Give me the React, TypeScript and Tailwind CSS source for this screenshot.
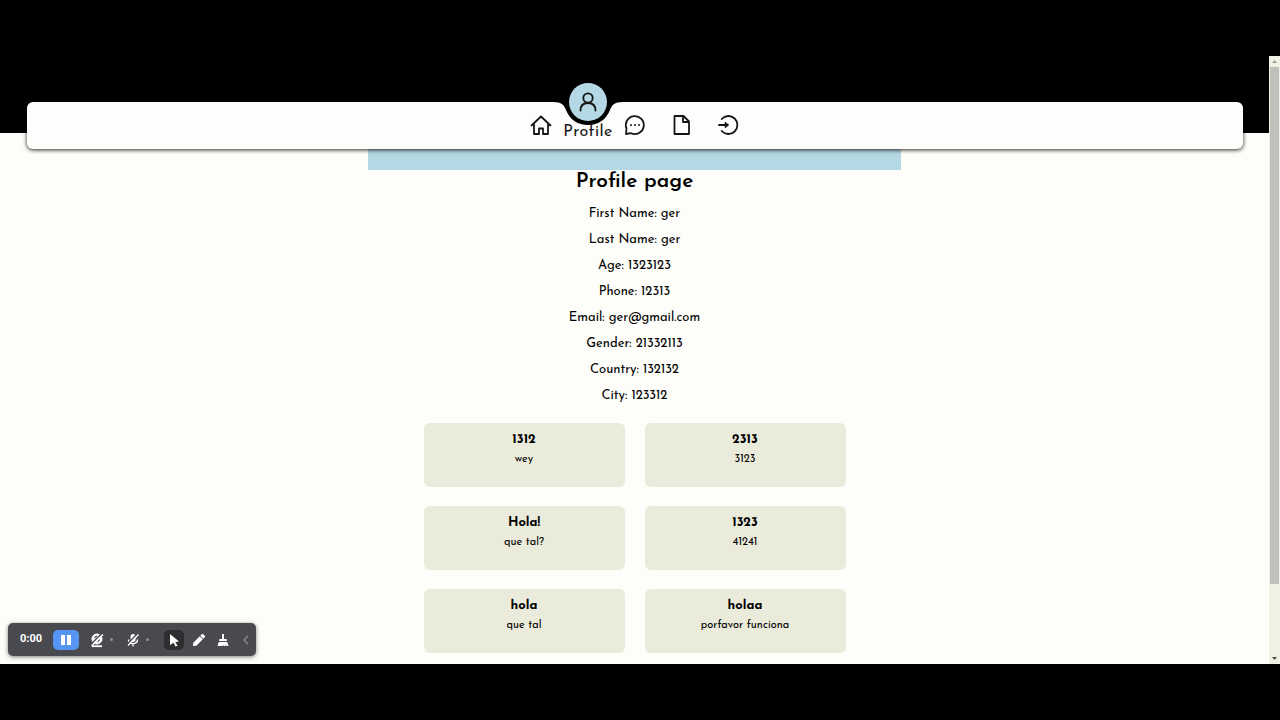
import type { ReactNode } from 'react';
import { FaPen } from 'react-icons/fa';

const details = [
  ['First Name', 'ger'],
  ['Last Name', 'ger'],
  ['Age', '1323123'],
  ['Phone', '12313'],
  ['Email', 'ger@gmail.com'],
  ['Gender', '21332113'],
  ['Country', '132132'],
  ['City', '123312'],
];

const posts = [
  { title: '1312', body: 'wey' },
  { title: '2313', body: '3123' },
  { title: 'Hola!', body: 'que tal?' },
  { title: '1323', body: '41241' },
  { title: 'hola', body: 'que tal' },
  { title: 'holaa', body: 'porfavor funciona' },
];

function Line({ children }: { children: ReactNode }) {
  return (
    <svg viewBox="0 0 24 24" fill="none" stroke="currentColor" strokeWidth="1.8" strokeLinejoin="round" strokeLinecap="round" className="size-6" aria-hidden="true">
      {children}
    </svg>
  );
}

function NavItem({ label, href, children }: { label: string; href: string; children: ReactNode }) {
  return (
    <li>
      <a href={href} aria-label={label} className="flex h-[47px] items-start justify-center pt-[11px]">
        <Line>{children}</Line>
      </a>
    </li>
  );
}

function NavBar() {
  return (
    <nav className="relative z-10 mr-[26px] ml-[27px] rounded-md bg-[#fdfdfb] shadow-[0_1px_4px_rgba(0,0,0,0.85)]">
      <ul className="grid grid-cols-[repeat(5,47px)] justify-center text-[#151515]">
        <NavItem label="Home" href="#home">
          <path d="M2.500 12.500L12 3.500L21.500 12.500M5 11V21H10V15.500H14V21H19V11" />
        </NavItem>
        <li className="relative">
          <svg viewBox="0 0 70 25" className="absolute -top-px left-1/2 h-[25px] w-[70px] -translate-x-1/2" aria-hidden="true">
            <path d="M0 0H70V1C61 1 59 4 57 9C53 19 45 24 35 24S17 19 13 9C11 4 9 1 0 1Z" fill="#000" />
          </svg>
          <a href="#profile" className="relative flex h-[47px] items-end justify-center pb-[7px] text-base leading-5 tracking-wide">
            <span className="absolute -top-[19px] flex size-[38px] items-center justify-center rounded-full bg-[#b5d9e4]">
              <Line>
                <circle cx="12" cy="8" r="4.700" />
                <path d="M4.500 20.500C4.500 15.500 7.500 13 12 13S19.500 15.500 19.500 20.500" />
              </Line>
            </span>
            <span className="relative">Profile</span>
          </a>
        </li>
        <NavItem label="Messages" href="#messages">
          <path d="M3 21L3.500 15.500A9 9 0 1 1 8 20.200Z" />
          <path d="M8 12H8.010M12 12H12.010M16 12H16.010" strokeWidth="2" />
        </NavItem>
        <NavItem label="Posts" href="#posts">
          <path d="M4.500 3H13.500L19 8.500V21H4.500ZM13 3V9H19" />
        </NavItem>
        <NavItem label="Log out" href="#logout">
          <path d="M4.700 6A9 9 0 1 1 4.700 18M2 12H10.500" />
          <path d="M8.500 9.500L11.500 12L8.500 14.500Z" fill="currentColor" strokeWidth="1" />
        </NavItem>
      </ul>
    </nav>
  );
}

function Recorder() {
  return (
    <div className="absolute bottom-2 left-2 z-20 flex h-[33px] items-center rounded-[5px] bg-[#484a50] pr-1 pl-3 text-white shadow-[0_1px_4px_rgba(0,0,0,0.5)]">
      <span className="w-[33px] font-['Roboto',sans-serif] text-[11px] font-bold">0:00</span>
      <button aria-label="Pause" className="mr-2.5 flex h-5 w-[26px] items-center justify-center rounded-[5px] bg-[#5695f2]">
        <svg viewBox="0 0 10 10" className="size-2.5" fill="currentColor"><path d="M0 0h4v10H0zM6 0h4v10H6z" /></svg>
      </button>
      <button aria-label="Camera off" className="flex w-9 items-center gap-[5px]">
        <svg viewBox="0 0 16 16" className="size-4" fill="none" stroke="currentColor" aria-hidden="true">
          <circle cx="8" cy="7" r="5" fill="currentColor" />
          <path d="M3 14.200H13" strokeWidth="1.800" />
          <path d="M1 13.200L13 1.200" stroke="#484a50" strokeWidth="1.500" />
          <path d="M5.500 6A3 3 0 0 1 8 4.200M10.500 7.500A3 3 0 0 1 8.500 9.500" stroke="#484a50" strokeWidth="1.200" />
          <path d="M2.500 14L14 2.500" strokeWidth="1.500" />
        </svg>
        <span className="size-[3px] rounded-full bg-[#8d8f92]" />
      </button>
      <button aria-label="Microphone off" className="flex w-9 items-center gap-[5px]">
        <svg viewBox="0 0 16 16" className="size-4" fill="none" stroke="currentColor" aria-hidden="true">
          <rect x="5.500" y="2" width="5" height="8" rx="2.500" fill="currentColor" stroke="none" />
          <path d="M3.500 7.500C3.500 13 12.500 13 12.500 7.500M8 11.500V14.500" strokeWidth="1.300" />
          <path d="M2 12.500L12 2" stroke="#484a50" strokeWidth="1.500" />
          <path d="M3 13.500L13.500 2.500" strokeWidth="1.300" />
        </svg>
        <span className="size-[3px] rounded-full bg-[#8d8f92]" />
      </button>
      <button aria-label="Pointer" className="mr-2 ml-[3px] flex size-5 items-center justify-center rounded-[5px] bg-[#2c2e30]">
        <svg viewBox="0 0 12 14" className="h-3.5 w-3" fill="currentColor" aria-hidden="true"><path d="M2 1L11 8.500L7.300 8.900L9.500 12.700L7.500 13.500L5.600 9.700L2 12Z" /></svg>
      </button>
      <button aria-label="Draw" className="mr-[11px] flex w-3.5 justify-center"><FaPen className="size-3" /></button>
      <button aria-label="Clear" className="mr-[11px] flex w-3 justify-center">
        <svg viewBox="0 0 12 14" className="h-3.5 w-3" fill="currentColor" aria-hidden="true">
          <path d="M5 1H7V6H9.500L10 8H2L2.500 6H5ZM1.800 9H10.200L11.500 13H9.500L8.800 11.500L8.500 13H6.500L6 11.500L5.500 13H0.500Z" />
        </svg>
      </button>
      <button aria-label="Collapse" className="flex w-3 justify-center text-[#8d8f92]">
        <svg viewBox="0 0 6 10" className="h-2.5 w-1.5" fill="none" stroke="currentColor" strokeWidth="1.200" aria-hidden="true"><path d="M5 1L1 5L5 9" /></svg>
      </button>
    </div>
  );
}

function ScrollTrack() {
  return (
    <div className="flex w-[11px] shrink-0 flex-col items-center bg-[#f0f0e4] text-[#77777c]" aria-hidden="true">
      <svg viewBox="0 0 11 11" className="size-[11px]" fill="#a0a0a0"><path d="M3 7L5.500 4L8 7Z" /></svg>
      <div className="w-[9px] grow-[517] bg-[#bfbfbc]" />
      <div className="grow-[69]" />
      <svg viewBox="0 0 11 11" className="size-[11px]" fill="#505050"><path d="M3 4L5.500 7L8 4Z" /></svg>
    </div>
  );
}

export default function App() {
  return (
    <div className="flex h-screen flex-col bg-black py-14 font-['Josefin_Sans','Lato',sans-serif] text-black">
      <div className="relative flex min-h-0 flex-1">
        <div className="min-w-0 flex-1 overflow-hidden bg-[#fdfdf9]">
          <header className="h-[77px] bg-black pt-[46px]">
            <NavBar />
          </header>
          <main className="flex flex-col items-center text-center">
            <div className="h-[37px] w-[42%] bg-[#b5d9e4]" />
            <h1 className="text-[21px] leading-6 font-semibold">Profile page</h1>
            <div className="mt-[7px] text-[13px] leading-[26px]">
              {details.map(([label, value]) => (
                <p key={label}>{label}: {value}</p>
              ))}
            </div>
            <section className="mt-3.5 grid grid-cols-[repeat(2,201px)] gap-x-5 gap-y-[19px]">
              {posts.map(({ title, body }) => (
                <article key={title} className="h-16 rounded-md bg-[#ebebdb] pt-[7px]">
                  <h2 className="text-[13px] leading-5 font-bold">{title}</h2>
                  <p className="text-[11px] leading-5">{body}</p>
                </article>
              ))}
            </section>
          </main>
        </div>
        <ScrollTrack />
        <Recorder />
      </div>
    </div>
  );
}
